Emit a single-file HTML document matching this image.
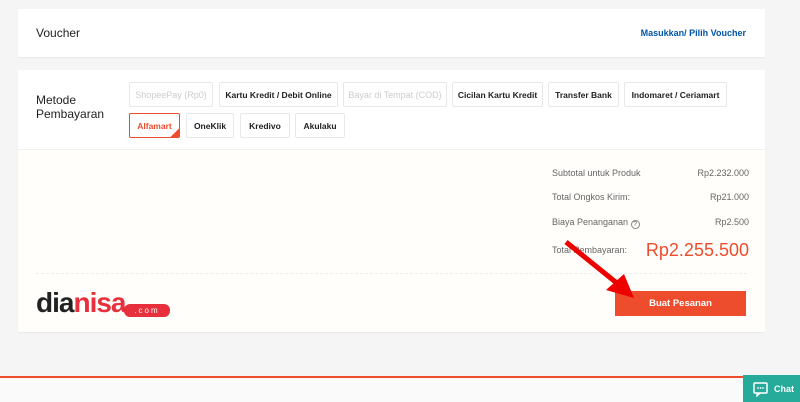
<!DOCTYPE html>
<html><head><meta charset="utf-8"><style>
*{margin:0;padding:0;box-sizing:border-box}
body{width:800px;height:402px;background:#f5f5f5;font-family:"Liberation Sans",sans-serif;position:relative;overflow:hidden}
.card{position:absolute;left:18px;width:747px;background:#fff;box-shadow:0 1px 1px rgba(0,0,0,.05)}
.abs{position:absolute}
.b{position:absolute;height:25px;border:1px solid #e8e8e8;border-radius:2px;font-size:8.5px;font-weight:bold;color:#222;display:flex;align-items:center;justify-content:center;white-space:nowrap;background:#fff}
.dis{color:#ccc;font-weight:normal;font-size:9px}
.lab{position:absolute;left:552px;font-size:9px;color:#666;line-height:11px;height:11px}
.val{position:absolute;right:51px;font-size:9px;color:#666;line-height:11px}
</style></head><body>
<div class="card" style="top:9px;height:48px">
 <div class="abs" style="left:18px;top:17px;font-size:12px;color:#222">Voucher</div>
 <div class="abs" style="right:19px;top:19px;font-size:9px;color:#05a;font-weight:bold">Masukkan/ Pilih Voucher</div>
</div>
<div class="card" style="top:70px;height:262px;background:#fffefb">
 <div class="abs" style="left:0;top:0;width:747px;height:80px;background:#fff;border-bottom:1px solid #f0f0f0"></div>
 <div class="abs" style="left:18px;top:23px;font-size:12px;color:#222;line-height:14px">Metode<br>Pembayaran</div>
 <div class="abs" style="left:18px;top:203px;width:711px;border-top:1px dashed #eee"></div>
</div>
<div class="b dis" style="left:129px;top:82px;width:84px">ShopeePay (Rp0)</div>
<div class="b" style="left:219px;top:82px;width:119px">Kartu Kredit / Debit Online</div>
<div class="b dis" style="left:343px;top:82px;width:104px">Bayar di Tempat (COD)</div>
<div class="b" style="left:452px;top:82px;width:91px">Cicilan Kartu Kredit</div>
<div class="b" style="left:548px;top:82px;width:71px">Transfer Bank</div>
<div class="b" style="left:624px;top:82px;width:103px">Indomaret / Ceriamart</div>
<div class="b" style="left:129px;top:113px;width:51px;border-color:#ee4d2d;color:#ee4d2d;overflow:hidden">Alfamart<span style="position:absolute;right:-6px;bottom:-6px;width:12px;height:12px;background:#ee4d2d;transform:rotate(45deg)"></span></div>
<div class="b" style="left:186px;top:113px;width:48px">OneKlik</div>
<div class="b" style="left:240px;top:113px;width:50px">Kredivo</div>
<div class="b" style="left:295px;top:113px;width:50px">Akulaku</div>

<div class="lab" style="top:168px">Subtotal untuk Produk</div><div class="val" style="top:168px">Rp2.232.000</div>
<div class="lab" style="top:192px">Total Ongkos Kirim:</div><div class="val" style="top:192px">Rp21.000</div>
<div class="lab" style="top:217px;overflow:visible">Biaya Penanganan <span style="display:inline-block;width:9px;height:9px;border:1px solid #888;border-radius:50%;font-size:7px;line-height:7px;text-align:center;vertical-align:-1px">?</span></div><div class="val" style="top:217px">Rp2.500</div>
<div class="lab" style="top:245px">Total Pembayaran:</div><div class="val" style="top:240px;font-size:18px;line-height:20px;color:#ee4d2d">Rp2.255.500</div>

<div class="abs" style="left:615px;top:291px;width:131px;height:25px;background:#ee4d2d;color:#fff;font-size:9.5px;font-weight:bold;display:flex;align-items:center;justify-content:center">Buat Pesanan</div>
<svg class="abs" style="left:560px;top:238px" width="80" height="70"><line x1="6" y1="4" x2="58" y2="46" stroke="#e00" stroke-width="5"/><polygon points="74,60 46,52 64,36" fill="#e00"/></svg>

<div class="abs" style="left:36px;top:288px;font-size:28px;font-weight:bold;color:#222;letter-spacing:-1px;line-height:30px">dia<span style="color:#e8303c">nisa</span></div>
<div class="abs" style="left:124px;top:304px;width:46px;height:13px;background:#e8303c;border-radius:6px;color:#fff;font-size:8px;text-align:center;line-height:13px;letter-spacing:2px">.com</div>

<div class="abs" style="left:0;top:376px;width:800px;height:2px;background:#ee4d2d"></div>
<div class="abs" style="left:0;top:378px;width:800px;height:24px;background:#fafafa"></div>
<div class="abs" style="left:743px;top:375px;width:57px;height:27px;background:#26aa99;color:#fff;font-size:9px;display:flex;align-items:center;padding-left:9px">
<svg width="18" height="16"><rect x="2" y="2" width="13" height="10" rx="1" fill="none" stroke="#fff" stroke-width="1.5"/><path d="M5 12 L5 15 L8 12" fill="none" stroke="#fff" stroke-width="1.3"/><circle cx="6" cy="7" r=".9" fill="#fff"/><circle cx="8.5" cy="7" r=".9" fill="#fff"/><circle cx="11" cy="7" r=".9" fill="#fff"/></svg><span style="margin-left:4px;font-weight:bold">Chat</span></div>
</body></html>
